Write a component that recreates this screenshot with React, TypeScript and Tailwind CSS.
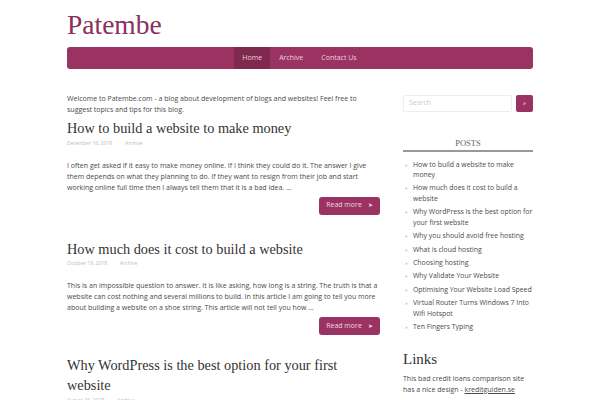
const serif = { fontFamily: '"Liberation Serif", "DejaVu Serif", serif' };

const posts = [
  {
    title: 'How to build a website to make money',
    date: 'December 16, 2018',
    excerpt:
      'I often get asked if it easy to make money online. If I think they could do it. The answer I give them depends on what they planning to do. If they want to resign from their job and start working online full time then I always tell them that it is a bad idea. …',
  },
  {
    title: 'How much does it cost to build a website',
    date: 'October 19, 2018',
    excerpt:
      'This is an impossible question to answer. It is like asking, how long is a string. The truth is that a website can cost nothing and several millions to build. In this article I am going to tell you more about building a website on a shoe string. This article will not tell you how …',
  },
  {
    title: 'Why WordPress is the best option for your first website',
    date: 'August 26, 2018',
    excerpt: '',
  },
];

const sidebarPosts = [
  'How to build a website to make money',
  'How much does it cost to build a website',
  'Why WordPress is the best option for your first website',
  'Why you should avoid free hosting',
  'What is cloud hosting',
  'Choosing hosting',
  'Why Validate Your Website',
  'Optimising Your Website Load Speed',
  'Virtual Router Turns Windows 7 Into Wifi Hotspot',
  'Ten Fingers Typing',
];

export default function App() {
  return (
    <div
      className="h-[400px] overflow-hidden bg-white text-[#4a4a4a]"
      style={{ fontFamily: '"Open Sans", "Liberation Sans", sans-serif' }}
    >
      <div className="mx-auto w-[466px]">
        {/* Header */}
        <div className="h-[47px] pt-[9px]">
          <h1 className="text-[27.5px] leading-[32px] text-[#8a2f60]" style={serif}>
            Patembe
          </h1>
        </div>

        {/* Nav */}
        <nav className="flex h-[22px] justify-center rounded-[3px] bg-[#9a3362] text-[7px] text-[#ecd0dd]">
          <a className="flex items-center bg-[#80294f] px-[8px]">Home</a>
          <a className="flex items-center px-[9px]">Archive</a>
          <a className="flex items-center px-[9px]">Contact Us</a>
        </nav>

        <div className="mt-[24px] flex gap-[23px]">
          {/* Main */}
          <main className="w-[313px]">
            <p className="text-[7px] leading-[11px]">
              Welcome to Patembe.com - a blog about development of blogs and websites! Feel free to suggest topics and tips for this blog.
            </p>
            {posts.map((p, i) => (
              <article key={i} className={i === 0 ? 'mt-[3px]' : i === 1 ? 'mt-[24px]' : 'mt-[20px]'}>
                <h2 className="text-[14.3px] leading-[20px] text-[#333]" style={serif}>
                  {p.title}
                </h2>
                <div className="mt-[1.5px] flex gap-[13px] text-[5px] leading-[7px] text-[#bbb]">
                  <span>{p.date}</span>
                  <span>Archive</span>
                </div>
                {p.excerpt && (
                  <>
                    <p className="mt-[13px] text-[7px] leading-[11px]">{p.excerpt}</p>
                    <div className="mt-[4px] flex justify-end">
                      <button className="flex h-[18px] w-[61px] items-center justify-center gap-[6px] rounded-[3px] bg-[#9a3362] text-[7px] text-[#f1d6e2]">
                        Read more
                        <span className="text-[5.5px]">➤</span>
                      </button>
                    </div>
                  </>
                )}
              </article>
            ))}
          </main>

          {/* Sidebar */}
          <aside className="w-[130px] pt-[1.5px]">
            <div className="flex h-[17px] gap-[4px]">
              <input
                className="w-[109px] rounded-[2px] border border-[#eee] px-[5px] text-[7px] placeholder:text-[#ccc]"
                placeholder="Search"
              />
              <button className="flex w-[17px] items-center justify-center rounded-[2px] bg-[#9a3362] text-white">
                <span className="text-[6px]">»</span>
              </button>
            </div>

            <h3
              className="mt-[26px] border-b-2 border-[#999] pb-[1px] text-center text-[8.5px] leading-[11px] text-[#666]"
              style={serif}
            >
              POSTS
            </h3>
            <ul className="mt-[8px] text-[6.9px] leading-[10.5px] text-[#4a4a4a]">
              {sidebarPosts.map((t) => (
                <li key={t} className="mb-[2.9px] flex">
                  <span className="w-[10px] shrink-0 pl-[2px] text-[5px] leading-[10.5px] text-[#999]">»</span>
                  <span>{t}</span>
                </li>
              ))}
            </ul>

            <h3 className="mt-[17px] text-[15px] leading-[18px] text-[#333]" style={serif}>
              Links
            </h3>
            <p className="mt-[5px] text-[7px] leading-[11px]">
              This bad credit loans comparison site has a nice design - <a className="underline">kreditguiden.se</a>
            </p>
          </aside>
        </div>
      </div>
    </div>
  );
}
